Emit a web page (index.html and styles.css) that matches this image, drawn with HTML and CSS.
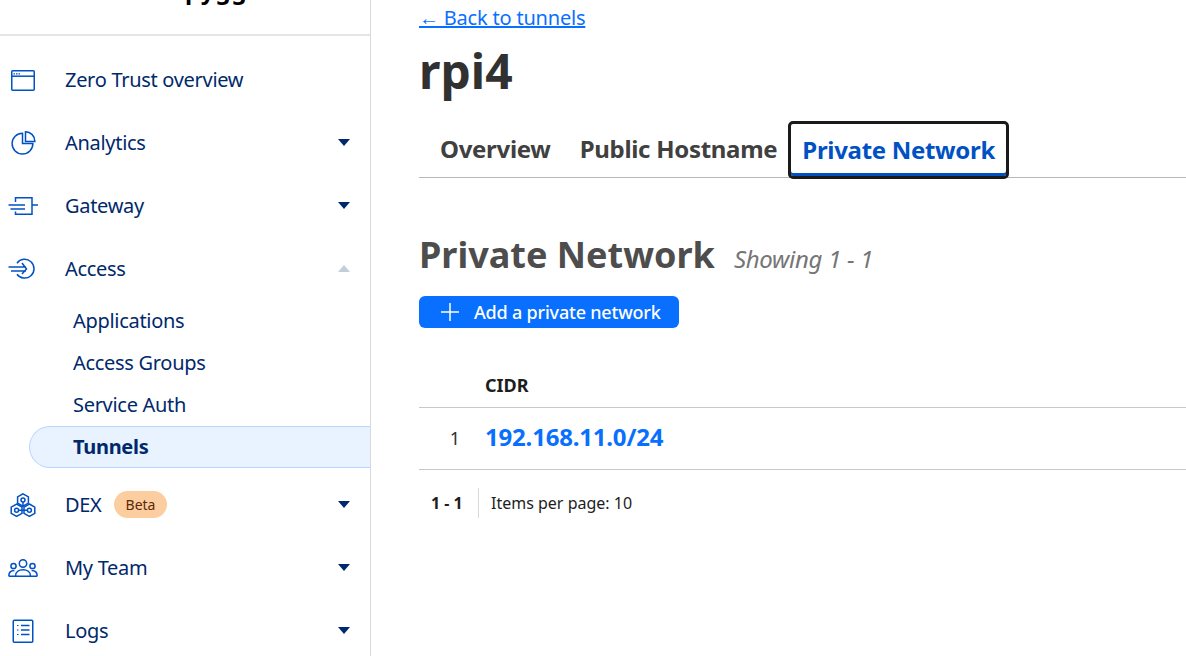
FILE: index.html
```html
<!DOCTYPE html>
<html lang="en">
<head>
    <meta charset="UTF-8">
    <meta name="viewport" content="width=device-width, initial-scale=1.0">
    <title>rpi4 - Tunnels</title>
    <link rel="stylesheet" href="styles.css">
</head>
<body>

    <!-- Sidebar -->
    <aside class="sidebar">
        <div class="account"><span class="account-name">pygg</span></div>

        <nav class="nav">
            <a class="nav-item">
                <svg class="nav-icon" viewBox="0 0 30 24"><rect x="3.75" y="2.75" width="22.5" height="19.5" rx="1"/><path d="M3.75 8.2h22.5"/><path class="dots" d="M5.5 5.8h1.5M8 5.8h1.5M10.5 5.8h1.5"/></svg>
                <span>Zero Trust overview</span>
            </a>
            <a class="nav-item">
                <svg class="nav-icon" viewBox="0 0 30 24"><path d="M14.5 2.2A10.4 10.4 0 1 0 24.9 12.6H14.5z"/><path d="M17.5 .8a9.4 9.4 0 0 1 9.4 9.6h-9.4z"/></svg>
                <span>Analytics</span>
                <i class="caret"></i>
            </a>
            <a class="nav-item">
                <svg class="nav-icon" viewBox="0 0 30 24"><path d="M7.5 8V3.75H24v16.5H7.5V17.5"/><path d="M.5 11H17M2.5 15H17M24 11h6"/></svg>
                <span>Gateway</span>
                <i class="caret"></i>
            </a>
            <a class="nav-item">
                <svg class="nav-icon" viewBox="0 0 30 24"><path d="M9 6.2a9.4 9.4 0 1 1 0 11"/><path d="M.5 10H18M3 14H18M14 6l4.5 6-4.5 5"/></svg>
                <span>Access</span>
                <i class="caret caret-up"></i>
            </a>
            <div class="subnav">
                <a class="sub-item">Applications</a>
                <a class="sub-item">Access Groups</a>
                <a class="sub-item">Service Auth</a>
                <a class="sub-item active">Tunnels</a>
            </div>
            <a class="nav-item">
                <svg class="nav-icon" viewBox="0 0 30 24"><path d="M15 .8l5.4 3.1v6.2L15 13.2l-5.4-3.1V3.9z"/><path d="M8.6 11l5.4 3.1v6.2l-5.4 3.1-5.4-3.1v-6.2z"/><path d="M21.4 11l5.4 3.1v6.2l-5.4 3.1-5.4-3.1v-6.2z"/><circle cx="15" cy="7" r="2"/><circle cx="8.6" cy="17.2" r="2"/><circle cx="21.4" cy="17.2" r="2"/><path d="M15 9v5M10.6 17.2h8.8"/></svg>
                <span>DEX</span>
                <span class="badge">Beta</span>
                <i class="caret"></i>
            </a>
            <a class="nav-item">
                <svg class="nav-icon" viewBox="0 0 30 24"><circle cx="15" cy="7.5" r="3.7"/><circle cx="5.5" cy="10" r="2.6"/><circle cx="24.5" cy="10" r="2.6"/><path d="M.8 20.2c0-4.4 3-5.6 5.6-5.6M29.2 20.2c0-4.4-3-5.6-5.6-5.6M7.5 20c0-4.2 3.4-6.3 7.5-6.3s7.5 2.1 7.5 6.3M.8 20.2h28.4"/></svg>
                <span>My Team</span>
                <i class="caret"></i>
            </a>
            <a class="nav-item">
                <svg class="nav-icon" viewBox="0 0 30 24"><rect x="5.25" y="1.25" width="19.5" height="22" rx="1"/><path class="dots" d="M9 6.5h1.5M9 11h1.5M9 15.5h1.5"/><path d="M13 6.5h8.5M13 11h8.5M13 15.5h8.5"/></svg>
                <span>Logs</span>
                <i class="caret"></i>
            </a>
        </nav>
    </aside>

    <!-- Tunnel detail -->
    <main class="content">
        <a class="back-link">← Back to tunnels</a>
        <h1>rpi4</h1>

        <div class="tabs">
            <a class="tab">Overview</a>
            <a class="tab">Public Hostname</a>
            <a class="tab tab-active">Private Network</a>
        </div>

        <div class="section-head">
            <h2>Private Network</h2>
            <em>Showing 1 - 1</em>
        </div>

        <button class="add-btn">
            <svg viewBox="0 0 18 18"><path d="M9 0v18M0 9h18"/></svg>
            Add a private network
        </button>

        <table class="cidr-table">
            <thead>
                <tr><th class="num"></th><th>CIDR</th></tr>
            </thead>
            <tbody>
                <tr><td class="num">1</td><td><a class="cidr-link">192.168.11.0/24</a></td></tr>
            </tbody>
        </table>

        <div class="pagination">
            <strong>1 - 1</strong>
            <span>Items per page: 10</span>
        </div>
    </main>

</body>
</html>
```

FILE: styles.css
```css
/* Global Styles */
* {
    margin: 0;
    padding: 0;
    box-sizing: border-box;
}

html, body {
    height: 656px;
    overflow: hidden;
}

body {
    display: flex;
    font-family: "Noto Sans", "Open Sans", sans-serif;
    background-color: #ffffff;
    color: #313131;
}

/* Sidebar Styles */
.sidebar {
    flex: 0 0 371px;
    height: 656px;
    border-right: 1px solid #d9d9d9;
    overflow: hidden;
}

.account {
    height: 36px;
    border-bottom: 2px solid #e5e5e5;
    overflow: hidden;
    padding-left: 185px;
}

.account-name {
    display: block;
    margin-top: -26px;
    font-size: 24px;
    line-height: 32px;
    font-weight: 700;
    color: #000000;
    letter-spacing: 1px;
}

.nav {
    padding-top: 12px;
    color: #00296b;
}

.nav-item {
    display: flex;
    align-items: center;
    height: 63px;
    padding-left: 8px;
    padding-right: 20px;
    font-size: 20px;
    letter-spacing: -0.3px;
}

.nav-icon {
    flex: 0 0 30px;
    width: 30px;
    height: 24px;
    margin-right: 27px;
    fill: none;
    stroke: #0051c3;
    stroke-width: 1.5;
}

.nav-icon .dots {
    stroke-width: 1.2;
}

.caret {
    width: 0;
    height: 0;
    margin-left: auto;
    border-left: 6.5px solid transparent;
    border-right: 6.5px solid transparent;
    border-top: 7px solid #00296b;
}

.caret-up {
    border-top: 0;
    border-bottom: 7px solid #c3ceda;
}

.badge {
    margin-left: 12px;
    padding: 0 12px;
    height: 27px;
    line-height: 27px;
    border-radius: 14px;
    background-color: #fbcd9f;
    color: #5c2a06;
    font-size: 14px;
    letter-spacing: 0;
}

.subnav {
    display: flex;
    flex-direction: column;
    padding-left: 29px;
    margin-bottom: 5px;
}

.sub-item {
    height: 42px;
    line-height: 40px;
    padding-left: 43px;
    font-size: 20px;
    letter-spacing: -0.3px;
    border: 1px solid transparent;
    border-right: 0;
}

.sub-item.active {
    font-weight: 700;
    background-color: #e9f2ff;
    border-color: #b9d6ff;
    border-radius: 21px 0 0 21px;
}

/* Content Styles */
.content {
    flex: 1;
    min-width: 0;
    padding-left: 48px;
}

.back-link {
    display: block;
    margin-top: 4px;
    font-size: 20px;
    line-height: 27px;
    color: #086fff;
    text-decoration: underline;
    letter-spacing: -0.2px;
}

h1 {
    margin-top: 8px;
    font-size: 48px;
    line-height: 64px;
    font-weight: 700;
    color: #313131;
}

.tabs {
    display: flex;
    align-items: flex-end;
    height: 57px;
    margin-top: 18px;
    border-bottom: 1px solid #b8b8b8;
}

.tab {
    padding: 0 8px 12px 21px;
    font-size: 24px;
    line-height: 32px;
    font-weight: 700;
    color: #404040;
    letter-spacing: -0.3px;
}

.tab-active {
    height: 58px;
    margin-bottom: -2px;
    margin-left: 3px;
    padding: 10px 11px 0;
    color: #0051c3;
    border: 3px solid #1a1a1a;
    border-radius: 5px;
    box-shadow: inset 0 -3px 0 #0051c3;
}

.section-head {
    display: flex;
    align-items: baseline;
    margin-top: 50px;
}

h2 {
    font-size: 36px;
    line-height: 54px;
    font-weight: 700;
    color: #4d4d4d;
}

.section-head em {
    margin-left: 19px;
    font-size: 24px;
    color: #757575;
    letter-spacing: -0.3px;
}

.add-btn {
    display: flex;
    align-items: center;
    width: 260px;
    height: 32px;
    margin-top: 14px;
    padding-left: 22px;
    border: none;
    border-radius: 6px;
    background-color: #086fff;
    color: #ffffff;
    font-family: inherit;
    font-size: 18px;
    font-weight: 500;
    letter-spacing: -0.2px;
}

.add-btn svg {
    width: 18px;
    height: 18px;
    margin-right: 15px;
    fill: none;
    stroke: #ffffff;
    stroke-width: 1.5;
}

.cidr-table {
    width: 100%;
    margin-top: 40px;
    border-collapse: collapse;
}

.cidr-table th {
    height: 39px;
    text-align: left;
    font-size: 18px;
    font-weight: 700;
    color: #1d1d1d;
    vertical-align: top;
    line-height: 34px;
}

.cidr-table td {
    height: 62px;
    border-top: 1px solid #c8c8c8;
    border-bottom: 1px solid #c8c8c8;
    padding-bottom: 4px;
}

.cidr-table .num {
    width: 66px;
    text-align: center;
    padding-left: 6px;
    padding-top: 4px;
    font-size: 18px;
    color: #313131;
}

.cidr-link {
    font-size: 24px;
    font-weight: 700;
    color: #086fff;
    letter-spacing: -0.2px;
}

.pagination {
    display: flex;
    align-items: center;
    height: 30px;
    margin-top: 18px;
    font-size: 16px;
    color: #1d1d1d;
}

.pagination strong {
    width: 60px;
    padding-left: 12px;
    height: 30px;
    line-height: 30px;
    border-right: 1px solid #d9d9d9;
}

.pagination span {
    padding-left: 12px;
}
```
